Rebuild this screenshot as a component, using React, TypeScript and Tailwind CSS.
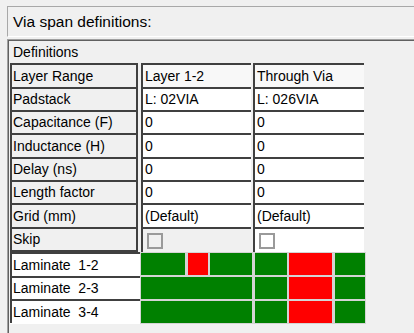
const FONT = { fontFamily: '"Liberation Sans", Arial, sans-serif' };

type Row = { label: string; a: string; b: string; h: string; head?: boolean; skip?: boolean };

const ROWS: Row[] = [
  { label: "Layer Range", a: "Layer 1-2", b: "Through Via", h: "h-[24px]", head: true },
  { label: "Padstack", a: "L: 02VIA", b: "L: 026VIA", h: "h-[23px]" },
  { label: "Capacitance (F)", a: "0", b: "0", h: "h-[23px]" },
  { label: "Inductance (H)", a: "0", b: "0", h: "h-[24px]" },
  { label: "Delay (ns)", a: "0", b: "0", h: "h-[23px]" },
  { label: "Length factor", a: "0", b: "0", h: "h-[23px]" },
  { label: "Grid (mm)", a: "(Default)", b: "(Default)", h: "h-[24px]" },
  { label: "Skip", a: "", b: "", h: "h-[25px]", skip: true },
];

// laminate bar segments: [width, colour]
const LAMINATES = [
  {
    label: "Laminate  1-2",
    segs: [
      [44, "g"], [20, "r"], [42, "g"], [32, "g"], [43, "r"], [30, "g"],
    ],
  },
  { label: "Laminate  2-3", segs: [[111, "g"], [32, "g"], [43, "r"], [30, "g"]] },
  { label: "Laminate  3-4", segs: [[111, "g"], [32, "g"], [43, "r"], [30, "g"]] },
] as const;

function Checkbox({ white }: { white?: boolean }) {
  return (
    <div
      className={`ml-[2px] h-[16px] w-[16px] border-2 border-[#9a9a9a] ${
        white ? "bg-white" : "bg-[#f0f0f0]"
      }`}
    />
  );
}

export default function App() {
  return (
    <div
      className="h-[333px] w-[414px] overflow-hidden bg-[#f0f0f0] pl-[7px] pt-[6px] text-black"
      style={FONT}
    >
      {/* title panel */}
      <div className="flex h-[31px] items-center border-l border-t border-b border-l-[#a8a8a8] border-t-[#a8a8a8] border-b-white pl-[5px] text-[15.5px]">
        Via span definitions:
      </div>

      {/* definitions frame */}
      <div className="mt-[2px] h-[300px] border-l border-t border-[#a0a0a0]">
        <div className="h-full border-l border-t border-[#606060] pl-[1px] text-[14px]">
          <div className="flex h-[22px] items-center pl-[3px]">Definitions</div>

          {ROWS.map((r) => (
            <div key={r.label} className={`flex ${r.h}`}>
              <div
                className={`flex w-[128px] items-center border-l-2 border-r-2 border-t-2 border-[#404040] bg-[#f0f0f0] pl-[1px] ${
                  r.skip ? "border-b-2" : ""
                }`}
              >
                {r.label}
              </div>
              <div
                className={`ml-[3px] flex w-[110px] items-center border-l-2 border-t-2 border-[#404040] pl-[2px] ${
                  r.head ? "bg-[#f8f8f8]" : r.skip ? "bg-[#f0f0f0]" : "bg-white"
                }`}
              >
                {r.skip ? <Checkbox /> : r.a}
              </div>
              <div
                className={`ml-[2px] flex w-[111px] items-center border-l-2 border-t-2 border-[#404040] pl-[2px] ${
                  r.head ? "bg-[#f8f8f8]" : "bg-white"
                }`}
              >
                {r.skip ? <Checkbox white /> : r.b}
              </div>
            </div>
          ))}

          {/* laminate map */}
          <div className="flex">
            <div className="w-[130px] bg-white">
              {LAMINATES.map((l, i) => (
                <div
                  key={l.label}
                  className={`flex items-center whitespace-pre border-l-2 border-t-2 border-[#404040] pl-[1px] ${
                    i === 1 ? "h-[23px]" : "h-[24px]"
                  }`}
                >
                  {l.label}
                </div>
              ))}
            </div>
            <div className="flex w-[226px] flex-col gap-[2px] bg-[#d4d4d4] p-[1px]">
              {LAMINATES.map((l) => (
                <div key={l.label} className="flex h-[22px] justify-between">
                  {l.segs.map(([w, c], j) => (
                    <div
                      key={j}
                      className={c === "g" ? "bg-[#008000]" : "bg-[#ff0000]"}
                      style={{ width: w }}
                    />
                  ))}
                </div>
              ))}
            </div>
          </div>
        </div>
      </div>
    </div>
  );
}
